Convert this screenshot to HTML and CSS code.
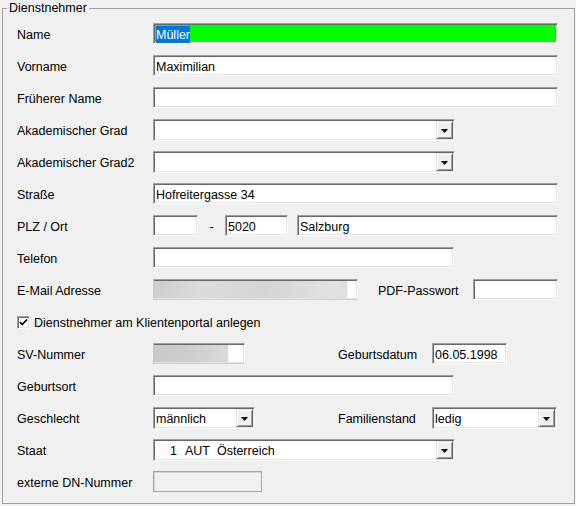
FILE: index.html
```html
<!DOCTYPE html>
<html lang="de">
<head>
<meta charset="utf-8">
<title>Dienstnehmer</title>
<link rel="stylesheet" href="styles.css">
</head>
<body>
<fieldset class="group">
  <legend>Dienstnehmer</legend>
  <div class="rows">
    <div class="row">
      <span class="lbl">Name</span>
      <div class="field w405 green"><span class="sel">Müller</span></div>
    </div>
    <div class="row">
      <span class="lbl">Vorname</span>
      <div class="field w405">Maximilian</div>
    </div>
    <div class="row">
      <span class="lbl">Früherer Name</span>
      <div class="field w405"></div>
    </div>
    <div class="row">
      <span class="lbl">Akademischer Grad</span>
      <div class="combo w302"><span class="ctext"></span><span class="btn"><svg width="7" height="4" viewBox="0 0 7 4"><polygon points="0,0 7,0 3.5,4" fill="#000"/></svg></span></div>
    </div>
    <div class="row">
      <span class="lbl">Akademischer Grad2</span>
      <div class="combo w302"><span class="ctext"></span><span class="btn"><svg width="7" height="4" viewBox="0 0 7 4"><polygon points="0,0 7,0 3.5,4" fill="#000"/></svg></span></div>
    </div>
    <div class="row">
      <span class="lbl">Straße</span>
      <div class="field w405">Hofreitergasse 34</div>
    </div>
    <div class="row">
      <span class="lbl">PLZ / Ort</span>
      <div class="field w45"></div>
      <span class="dash">-</span>
      <div class="field w63">5020</div>
      <div class="field w261 ml9">Salzburg</div>
    </div>
    <div class="row">
      <span class="lbl">Telefon</span>
      <div class="field w301"></div>
    </div>
    <div class="row">
      <span class="lbl">E-Mail Adresse</span>
      <div class="field w205 blur"></div>
      <span class="lbl2 pdf">PDF-Passwort</span>
      <div class="field w85"></div>
    </div>
    <div class="row check-row">
      <span class="checkbox"><svg width="11" height="11" viewBox="0 0 11 11"><polyline points="2,5 4.2,7.5 9,2.5" fill="none" stroke="#000" stroke-width="1.7"/></svg></span>
      <span class="check-label">Dienstnehmer am Klientenportal anlegen</span>
    </div>
    <div class="row">
      <span class="lbl">SV-Nummer</span>
      <div class="field w92 blur2"></div>
      <span class="lbl2 gd">Geburtsdatum</span>
      <div class="field w75">06.05.1998</div>
    </div>
    <div class="row">
      <span class="lbl">Geburtsort</span>
      <div class="field w301"></div>
    </div>
    <div class="row">
      <span class="lbl">Geschlecht</span>
      <div class="combo w102"><span class="ctext">männlich</span><span class="btn"><svg width="7" height="4" viewBox="0 0 7 4"><polygon points="0,0 7,0 3.5,4" fill="#000"/></svg></span></div>
      <span class="lbl2 fs">Familienstand</span>
      <div class="combo w125"><span class="ctext">ledig</span><span class="btn"><svg width="7" height="4" viewBox="0 0 7 4"><polygon points="0,0 7,0 3.5,4" fill="#000"/></svg></span></div>
    </div>
    <div class="row">
      <span class="lbl">Staat</span>
      <div class="combo w302"><span class="ctext staat"><span class="nr">1</span><span class="iso">AUT</span><span>Österreich</span></span><span class="btn"><svg width="7" height="4" viewBox="0 0 7 4"><polygon points="0,0 7,0 3.5,4" fill="#000"/></svg></span></div>
    </div>
    <div class="row">
      <span class="lbl">externe DN-Nummer</span>
      <div class="field w109 disabled"></div>
    </div>
  </div>
</fieldset>
</body>
</html>
```

FILE: styles.css
```css
html, body {
  margin: 0;
  padding: 0;
  background: #f0f0f0;
}
body {
  font-family: "Liberation Sans", Arial, sans-serif;
  font-size: 12.5px;
  color: #000;
  width: 576px;
  height: 506px;
  overflow: hidden;
}
.group {
  margin: 0 0 0 2px;
  padding: 0 0 0 4px;
  width: 573px;
  box-sizing: border-box;
  border: 1px solid #a0a0a0;
  min-width: 0;
}
.group legend {
  padding: 0 2px;
  line-height: 16px;
  font-size: 12.5px;
}
.rows {
  padding: 7px 0 0 10px;
  display: flex;
  flex-direction: column;
}
.row {
  height: 32px;
  display: flex;
  align-items: flex-start;
}
.lbl {
  width: 136px;
  flex: none;
  line-height: 21px;
  padding-top: 2px;
  white-space: nowrap;
}
.lbl2 {
  flex: none;
  line-height: 21px;
  padding-top: 2px;
  white-space: nowrap;
}
.pdf { margin-left: 20px; width: 95px; }
.gd { margin-left: 93px; width: 94px; }
.fs { margin-left: 83px; width: 94px; }

.field {
  box-sizing: border-box;
  height: 21px;
  flex: none;
  background: #fff;
  border: 1px solid;
  border-color: #a0a0a0 #fff #fff #a0a0a0;
  box-shadow: inset 1px 1px 0 #696969, inset -1px -1px 0 #e3e3e3;
  padding: 3px 0 0 2px;
  line-height: 16px;
  white-space: nowrap;
  overflow: hidden;
}
.w405 { width: 405px; }
.w302 { width: 302px; }
.w301 { width: 301px; }
.w45 { width: 45px; }
.w63 { width: 63px; }
.w261 { width: 261px; }
.w205 { width: 205px; }
.w85 { width: 85px; }
.w92 { width: 92px; }
.w75 { width: 75px; }
.w102 { width: 102px; }
.w125 { width: 125px; }
.w109 { width: 109px; }
.ml9 { margin-left: 9px; }

.dash {
  width: 27px;
  flex: none;
  text-align: center;
  line-height: 21px;
  padding-top: 2px;
}
.green {
  background: #00ff00;
  padding: 2px 0 0 2px;
}
.sel {
  background: #0078d7;
  color: #fff;
  display: inline-block;
  line-height: 16px;
  padding-top: 1px;
}
.blur {
  background: linear-gradient(to right, #cdcdcd 0%, #dcdcdc 25%, #d4d4d4 55%, #e2e2e2 88%, #dedede 95%, #fff 95.5%);
  border-left-color: #cdcdcd;
  border-bottom-color: #cfcfcf;
  box-shadow: inset 0 1px 0 #696969, inset -1px -1px 0 #e3e3e3;
}
.blur2 {
  background: linear-gradient(to right, #c8c8c8 0%, #d0d0d0 50%, #dadada 82%, #fff 83%);
  border-left-color: #c8c8c8;
  border-bottom-color: #cccccc;
  box-shadow: inset 0 1px 0 #696969, inset -1px -1px 0 #e3e3e3;
}
.disabled {
  background: #f0f0f0;
  border: 1px solid #a6a6a6;
  box-shadow: inset 1px 1px 0 #d4d4d4;
}

.combo {
  box-sizing: border-box;
  height: 22px;
  flex: none;
  display: flex;
  background: #fff;
  border: 1px solid;
  border-color: #a0a0a0 #fff #fff #a0a0a0;
  box-shadow: inset 1px 1px 0 #696969, inset -1px -1px 0 #e3e3e3;
  padding: 1px;
}
.ctext {
  flex: 1;
  padding: 2px 0 0 1px;
  line-height: 16px;
  white-space: nowrap;
  overflow: hidden;
}
.staat .nr { margin-left: 14px; margin-right: 8px; }
.staat .iso { margin-right: 7px; }
.btn {
  box-sizing: border-box;
  width: 17px;
  height: 18px;
  flex: none;
  background: #f0f0f0;
  border: 1px solid;
  border-color: #e3e3e3 #696969 #696969 #e3e3e3;
  box-shadow: inset 1px 1px 0 #fff, inset -1px -1px 0 #a0a0a0;
  display: flex;
  align-items: center;
  justify-content: center;
}
.btn svg { display: block; margin-top: 1px; }

.check-row {
  align-items: flex-start;
}
.checkbox {
  box-sizing: border-box;
  width: 13px;
  height: 13px;
  flex: none;
  background: #fff;
  border: 1px solid;
  border-color: #a0a0a0 #fff #fff #a0a0a0;
  box-shadow: inset 1px 1px 0 #696969, inset -1px -1px 0 #e3e3e3;
  display: flex;
  align-items: center;
  justify-content: center;
  margin-top: 5px;
}
.checkbox svg { display: block; }
.check-label {
  margin-left: 4px;
  line-height: 16px;
  margin-top: 4px;
}
```
